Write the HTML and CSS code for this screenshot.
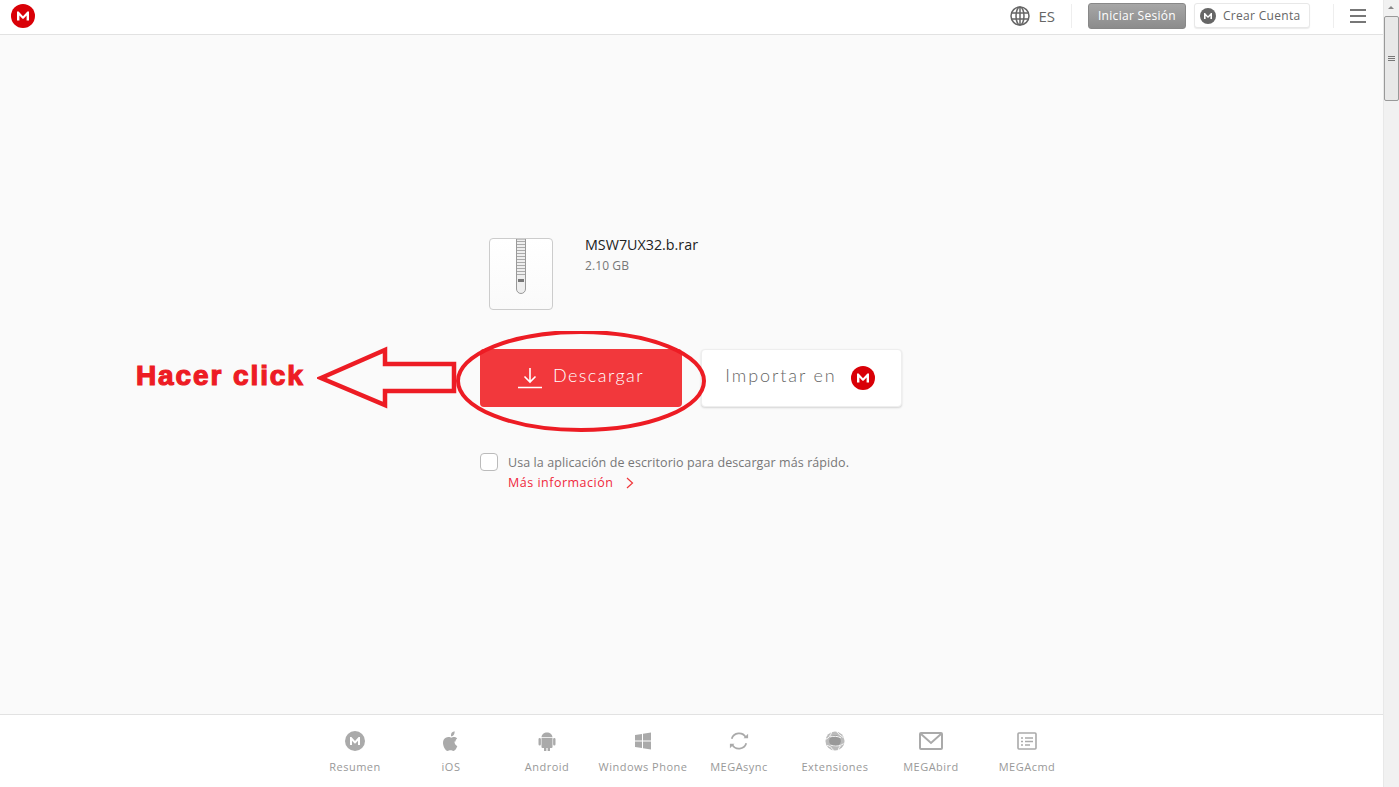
FILE: index.html
```html
<!DOCTYPE html>
<html lang="es">
<head>
    <meta charset="UTF-8">
    <title>MEGA</title>
    <link rel="stylesheet" href="styles.css">
</head>
<body>
<div class="window">
    <div class="page">
        <header class="topbar">
            <svg class="logo" viewBox="0 0 24 24"><circle cx="12" cy="12" r="12" fill="#d90007"/><path d="M6 16.5V7.5h1.6L12 12.2l4.4-4.7H18v9h-2.4v-5l-3.1 3.3h-1l-3.1-3.3v5z" fill="#fff"/></svg>
            <div class="topbar-right">
                <svg class="globe" viewBox="0 0 20 20" fill="none" stroke="#666" stroke-width="1.5"><circle cx="10" cy="10" r="9"/><ellipse cx="10" cy="10" rx="4" ry="9"/><path d="M10 1v18M1.5 7h17M1.5 13h17"/></svg>
                <span class="lang">ES</span>
                <span class="sep sep-lang"></span>
                <button class="btn-login">Iniciar Sesión</button>
                <button class="btn-create">
                    <svg class="mini-logo" viewBox="0 0 24 24"><circle cx="12" cy="12" r="12" fill="#666"/><path d="M6 16.5V7.5h1.6L12 12.2l4.4-4.7H18v9h-2.4v-5l-3.1 3.3h-1l-3.1-3.3v5z" fill="#fff"/></svg>
                    Crear Cuenta
                </button>
                <span class="sep sep-menu"></span>
                <div class="burger"><span></span><span></span><span></span></div>
            </div>
        </header>

        <main class="content">
            <div class="download-box">
                <div class="file-info">
                    <div class="file-icon">
                        <svg viewBox="0 0 12 56" width="12" height="56">
                            <path d="M1.5 0v50a4.5 4.5 0 0 0 9 0V0z" fill="#eee" stroke="#999"/>
                            <path d="M2 2.500h8M2 5.500h8M2 8.500h8M2 11.500h8M2 14.500h8M2 17.500h8M2 20.500h8M2 23.500h8M2 26.500h8M2 29.500h8M2 32.500h8M2 35.500h8" stroke="#aaa"/>
                            <rect x="3" y="40" width="6" height="3" fill="#777"/>
                        </svg>
                    </div>
                    <div class="file-text">
                        <div class="file-name">MSW7UX32.b.rar</div>
                        <div class="file-size">2.10 GB</div>
                    </div>
                </div>
                <div class="actions">
                    <button class="btn-download">
                        <svg viewBox="0 0 24 22" width="24" height="22" fill="none" stroke="#fff" stroke-width="1.6"><path d="M12 1v14M6.5 9.5l5.5 5.5 5.500-5.500M0 20.500h24"/></svg>
                        <span class="btn-label">Descargar</span>
                    </button>
                    <button class="btn-import">
                        <span class="btn-label">Importar en</span>
                        <svg viewBox="0 0 24 24" width="24" height="24"><circle cx="12" cy="12" r="12" fill="#d90007"/><path d="M6 16.5V7.5h1.6L12 12.2l4.4-4.7H18v9h-2.4v-5l-3.1 3.3h-1l-3.1-3.3v5z" fill="#fff"/></svg>
                    </button>
                </div>
                <div class="desktop-app">
                    <span class="checkbox"></span>
                    <div class="desktop-text">
                        <div>Usa la aplicación de escritorio para descargar más rápido.</div>
                        <a class="more-info">Más información
                            <svg viewBox="0 0 8 12" width="8" height="12" fill="none" stroke="#f0373a" stroke-width="1.2"><path d="M1 1l5.500 5-5.500 5"/></svg>
                        </a>
                    </div>
                </div>
            </div>
        </main>

        <footer class="footer">
            <div class="foot-item">
                <svg viewBox="0 0 20 20" width="20" height="20"><circle cx="10" cy="10" r="10" fill="#aaa"/><path d="M5 14V6h1.400L10 10l3.600-4H15v8h-2V9.800l-2.600 2.800h-.8L7 9.800V14z" fill="#fff"/></svg>
                <span>Resumen</span>
            </div>
            <div class="foot-item">
                <svg viewBox="0 0 20 20" width="20" height="20"><path d="M14.500 10.600c0-2 1.600-2.900 1.700-3-1-1.300-2.400-1.500-2.900-1.500-1.200-.1-2.400.7-3 .7s-1.600-.7-2.600-.7C6.300 6.100 2 7 2 12c0 3.200 2.500 8 4.600 8 1 0 1.500-.7 2.900-.7s1.700.7 2.900.7c2 0 3.600-3.700 3.900-4.900-.1 0-2.800-1.100-2.800-4.500zM12.700 3.900c.6-.7 1-1.700.9-3.700-1 .1-2 .6-2.700 1.400-.5.600-1 1.700-.9 3.600 1 .1 2-.5 2.700-1.300z" fill="#aaa"/></svg>
                <span>iOS</span>
            </div>
            <div class="foot-item">
                <svg viewBox="0 0 20 20" width="20" height="20" fill="#aaa"><path d="M4.500 7h11v9a1 1 0 0 1-1 1H13v2.500a1.200 1.200 0 0 1-2.400 0V17H9.400v2.500a1.200 1.200 0 0 1-2.400 0V17H5.500a1 1 0 0 1-1-1zM1.500 8.200a1.200 1.200 0 0 1 2.400 0v5a1.200 1.200 0 0 1-2.400 0zM16.100 8.200a1.200 1.200 0 0 1 2.400 0v5a1.200 1.200 0 0 1-2.400 0zM4.500 6.300C4.700 3.500 7 1.500 10 1.500s5.300 2 5.500 4.800z"/></svg>
                <span>Android</span>
            </div>
            <div class="foot-item">
                <svg viewBox="0 0 20 20" width="20" height="20" fill="#aaa"><path d="M2 4l7-1v6.500H2zM10 2.800L18 1.500v8h-8zM2 10.500h7V17l-7-1zM10 10.500h8v8l-8-1.300z"/></svg>
                <span>Windows Phone</span>
            </div>
            <div class="foot-item">
                <svg viewBox="0 0 22 22" width="22" height="22" fill="none" stroke="#aaa" stroke-width="2"><path d="M3 8.500A8.500 8.500 0 0 1 18.500 7M19 13.500A8.500 8.500 0 0 1 3.500 15"/><path d="M16 8h5V3zM6 14H1v5z" fill="#aaa" stroke="none"/></svg>
                <span>MEGAsync</span>
            </div>
            <div class="foot-item">
                <svg viewBox="0 0 22 22" width="22" height="22"><circle cx="11" cy="11" r="10.500" fill="#bbb"/><circle cx="11" cy="11" r="6.500" fill="#999"/><path d="M1 9C4 8 6 5 7.500 1M13 1c1.500 2 4 4 7.500 6.500M2 16c3 0 5 2 7.500 5.500M20.500 14c-3 1-5 3.500-6 7M5.500 6.500c4-1 8-1 12 1M17 15.500c-3 1.500-7 1.500-11 0" stroke="#fff" stroke-width="1" fill="none"/></svg>
                <span>Extensiones</span>
            </div>
            <div class="foot-item">
                <svg viewBox="0 0 24 18" width="24" height="18" fill="none" stroke="#aaa" stroke-width="2"><rect x="1" y="1" width="22" height="16" rx="1"/><path d="M2 2l10 9 10-9"/></svg>
                <span>MEGAbird</span>
            </div>
            <div class="foot-item">
                <svg viewBox="0 0 20 20" width="20" height="20" fill="none" stroke="#aaa" stroke-width="1.600"><rect x="1" y="2" width="18" height="16" rx="1"/><path d="M4 7h2M8 7h8M4 10.500h2M8 10.500h8M4 14h2M8 14h5"/></svg>
                <span>MEGAcmd</span>
            </div>
        </footer>
    </div>

    <div class="scrollbar">
        <div class="scroll-arrow"></div>
        <div class="scroll-thumb"><span></span><span></span><span></span></div>
        <div class="scroll-track"></div>
    </div>

    <!-- anotacion encima de la captura -->
    <div class="hint-text">Hacer click</div>
    <svg class="hint-draw" viewBox="0 0 400 110" width="400" height="110" fill="none" stroke="#ed1c24">
        <path d="M4 47L68 19v14h69v27H68v14z" stroke-width="4.500" stroke-linejoin="miter"/>
        <ellipse cx="264" cy="50" rx="123" ry="49" stroke-width="4"/>
    </svg>
</div>
</body>
</html>
```

FILE: styles.css
```css
* {
    box-sizing: border-box;
}
html, body {
    margin: 0;
    padding: 0;
    height: 100%;
    overflow: hidden;
}
body {
    font-family: "Open Sans", "Liberation Sans", sans-serif;
    color: #666;
}
button {
    font-family: inherit;
    cursor: pointer;
}
.window {
    position: relative;
    display: flex;
    width: 1399px;
    height: 787px;
}
.page {
    flex: 1;
    display: flex;
    flex-direction: column;
    background: #fafafa;
}

/* barra superior */
.topbar {
    height: 35px;
    flex: none;
    display: flex;
    align-items: center;
    justify-content: space-between;
    background: #fff;
    border-bottom: 1px solid #e2e2e2;
    padding: 0 17px 3px 11px;
}
.logo {
    width: 24px;
    height: 24px;
}
.topbar-right {
    display: flex;
    align-items: center;
}
.globe {
    width: 20px;
    height: 20px;
}
.lang {
    font-size: 15px;
    margin-left: 8px;
    color: #666;
}
.sep {
    width: 1px;
    height: 24px;
    background: #eee;
}
.sep-lang {
    margin: 0 16px;
}
.sep-menu {
    margin: 0 16px 0 23px;
}
.btn-login {
    width: 98px;
    height: 26px;
    padding: 0;
    background: linear-gradient(#a6a6a6, #8c8c8c);
    border: 1px solid #888;
    border-radius: 3px;
    color: #fff;
    font-size: 12px;
    letter-spacing: 0.3px;
}
.btn-create {
    display: flex;
    align-items: center;
    width: 116px;
    height: 25px;
    margin-left: 8px;
    padding: 0 0 0 5px;
    background: #fff;
    border: 1px solid #e8e8e8;
    border-radius: 3px;
    box-shadow: 0 1px 1px rgba(0, 0, 0, 0.08);
    color: #666;
    font-size: 12px;
    letter-spacing: 0.3px;
}
.mini-logo {
    width: 16px;
    height: 16px;
    margin-right: 7px;
}
.burger {
    display: flex;
    flex-direction: column;
    gap: 4px;
    width: 16px;
}
.burger span {
    height: 2px;
    background: #777;
}

/* contenido */
.content {
    flex: 1;
    display: flex;
    justify-content: center;
    padding: 203px 1px 0 0;
}
.download-box {
    width: 422px;
}
.file-info {
    display: flex;
    padding-left: 9px;
}
.file-icon {
    width: 64px;
    height: 72px;
    display: flex;
    justify-content: center;
    background: linear-gradient(#fff, #fafafa);
    border: 1px solid #ccc;
    border-radius: 4px;
}
.file-text {
    margin-left: 32px;
}
.file-name {
    font-size: 14.300px;
    line-height: 16px;
    color: #222;
    margin-top: -1px;
}
.file-size {
    font-size: 12px;
    line-height: 16px;
    letter-spacing: 0.1px;
    color: #777;
    margin-top: 5px;
}
.actions {
    display: flex;
    justify-content: space-between;
    margin-top: 39px;
}
.btn-download {
    width: 202px;
    height: 58px;
    display: flex;
    align-items: center;
    justify-content: center;
    gap: 11px;
    padding: 0;
    background: #f2383c;
    border: none;
    border-radius: 4px;
    color: #fff;
    font-family: "Lato", sans-serif;
    font-size: 18px;
    font-weight: 300;
    letter-spacing: 1.450px;
}
.btn-import {
    width: 201px;
    height: 58px;
    display: flex;
    align-items: center;
    justify-content: center;
    gap: 14px;
    padding: 0 3px 0 0;
    background: #fff;
    border: 1px solid #eee;
    border-radius: 4px;
    box-shadow: 0 1px 2px rgba(0, 0, 0, 0.15);
    color: #666;
    font-family: "Lato", sans-serif;
    font-size: 18px;
    font-weight: 300;
    letter-spacing: 1.900px;
}
.btn-label {
    margin-bottom: 6px;
}
.desktop-app {
    display: flex;
    margin-top: 46px;
}
.checkbox {
    width: 18px;
    height: 18px;
    flex: none;
    background: #fff;
    border: 1px solid #bbb;
    border-radius: 4px;
}
.desktop-text {
    margin-left: 10px;
    font-size: 12.500px;
    line-height: 20px;
    letter-spacing: 0.09px;
    color: #777;
}
.more-info {
    display: flex;
    align-items: center;
    gap: 13px;
    letter-spacing: 0.5px;
    color: #f0283c;
}

/* pie */
.footer {
    height: 73px;
    flex: none;
    display: flex;
    justify-content: center;
    background: #fff;
    border-top: 1px solid #e2e2e2;
    padding-right: 1px;
}
.foot-item {
    width: 96px;
    height: 100%;
    display: flex;
    flex-direction: column;
    align-items: center;
    justify-content: flex-start;
    padding-top: 16px;
}
.foot-item svg {
    height: 20px;
}
.foot-item span {
    margin-top: 8px;
    font-size: 11px;
    letter-spacing: 0.5px;
    color: #999;
    white-space: nowrap;
}

/* barra de desplazamiento */
.scrollbar {
    width: 16px;
    flex: none;
    display: flex;
    flex-direction: column;
    background: #f1f1f1;
    border-left: 1px solid #e8e8e8;
}
.scroll-arrow {
    height: 16px;
    flex: none;
    position: relative;
}
.scroll-arrow::after {
    content: "";
    position: absolute;
    left: 4px;
    top: 6px;
    border: 3.500px solid transparent;
    border-top: 0;
    border-bottom: 3.500px solid #888;
}
.scroll-thumb {
    height: 85px;
    flex: none;
    display: flex;
    flex-direction: column;
    align-items: center;
    justify-content: center;
    gap: 1px;
    background: #e8e8e8;
    border: 1px solid #999;
    border-radius: 2px;
}
.scroll-thumb span {
    width: 7px;
    height: 1px;
    background: #777;
}
.scroll-track {
    flex: 1;
}

/* anotacion */
.hint-text {
    position: absolute;
    left: 136px;
    top: 359px;
    font-family: "Liberation Sans", sans-serif;
    font-size: 28px;
    font-weight: bold;
    line-height: 34px;
    letter-spacing: 1.900px;
    color: #ed1c24;
    -webkit-text-stroke: 1.200px #ed1c24;
}
.hint-draw {
    position: absolute;
    left: 317px;
    top: 331px;
}
```
